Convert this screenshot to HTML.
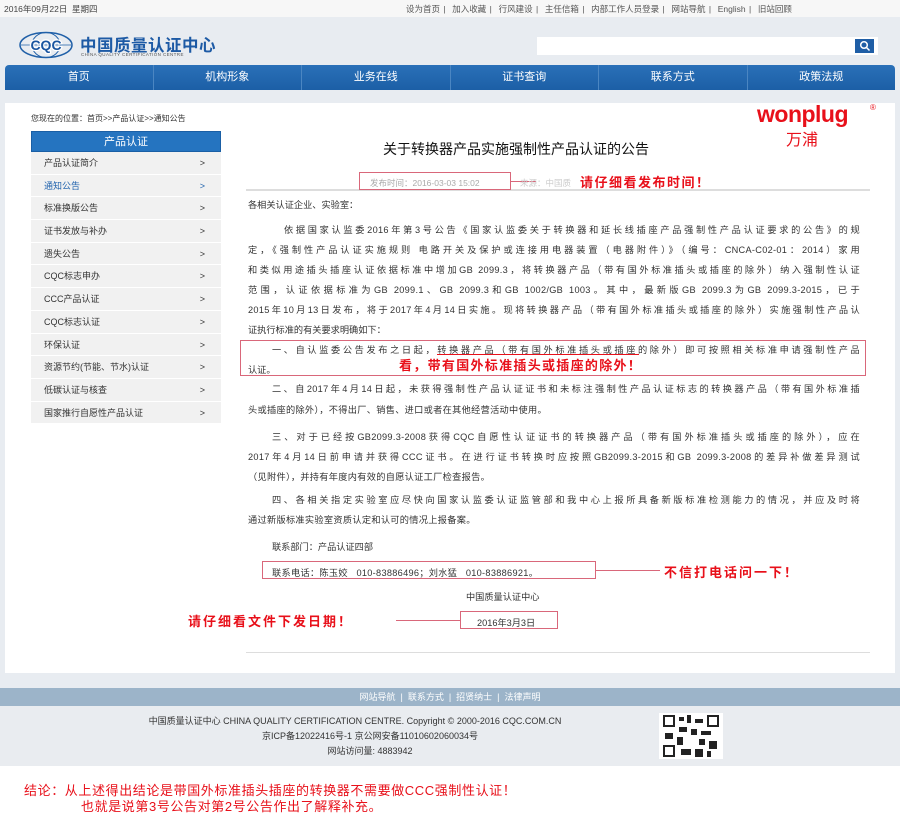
<!DOCTYPE html>
<html><head><meta charset="utf-8">
<style>
*{margin:0;padding:0;box-sizing:border-box}
body{width:900px;height:820px;position:relative;background:#fff;font-family:"Liberation Sans","Noto Sans CJK SC",sans-serif;overflow:hidden;color:#333}
.a{position:absolute;white-space:nowrap}
.top{left:0;top:0;width:900px;height:17px;background:#f7f7f7}
.hdr{left:0;top:17px;width:900px;height:671px;background:#e8ecf1}
.nav{left:5px;top:65px;width:890px;height:25px;background:linear-gradient(#2a70b8,#1c5fa6);border-radius:4px 4px 0 0;display:flex}
.nav div{flex:1;color:#fff;font-size:11px;text-align:center;line-height:25px;border-right:1px solid #4b86c2}
.nav div:last-child{border:none}
.panel{left:5px;top:103px;width:890px;height:570px;background:#fff}
.side{left:31px;top:131px;width:190px}
.side .h{height:21px;background:#2574c0;color:#fff;font-size:11px;text-align:center;line-height:21px;border:1px solid #1a5fa5}
.side .i{height:22.7px;background:#f1f1f1;border-bottom:1px solid #fff;font-size:9px;line-height:22px;padding-left:13px;position:relative;color:#333}
.side .i:after{content:">";position:absolute;right:16px;font-size:9px}
.bl{font-size:9.2px;color:#333;left:248px;width:612px;text-align:justify;text-align-last:justify;letter-spacing:.3px}
.red{color:#e8101a;font-weight:bold}
.box{position:absolute;border:1px solid #d9677a}
.foot{left:0;top:688px;width:900px;height:18px;background:#9cb4c9;color:#fff;font-size:9px;text-align:center;line-height:18px}
.ft{font-size:9px;color:#333;text-align:center}
</style></head><body>
<div class="a top"></div>
<div class="a" style="left:4px;top:3px;font-size:8.5px;color:#444">2016年09月22日 &nbsp;星期四</div>
<div class="a" style="left:406px;top:3px;font-size:8.5px;color:#555;word-spacing:1px">设为首页 | &nbsp;加入收藏 | &nbsp;行风建设 | &nbsp;主任信箱 | &nbsp;内部工作人员登录 | &nbsp;网站导航 | &nbsp;English | &nbsp;旧站回顾</div>
<div class="a hdr"></div>
<svg class="a" style="left:18px;top:31px" width="56" height="28"><ellipse cx="28" cy="14" rx="26" ry="12.5" fill="none" stroke="#2060a8" stroke-width="1.5"/><ellipse cx="28" cy="14" rx="14" ry="12.5" fill="none" stroke="#2060a8" stroke-width="1"/><line x1="3" y1="14" x2="53" y2="14" stroke="#2060a8" stroke-width=".8"/><text x="28" y="19" text-anchor="middle" font-family="Liberation Sans" font-weight="bold" font-size="14" fill="#1a55a0" stroke="#fff" stroke-width="2.5" paint-order="stroke">CQC</text></svg>
<div class="a" style="left:80px;top:32px;font-size:16.5px;color:#1d5aa5;font-weight:bold;letter-spacing:.5px">中国质量认证中心</div>
<div class="a" style="left:81px;top:52px;font-size:4.5px;color:#555;letter-spacing:.4px">CHINA QUALITY CERTIFICATION CENTRE</div>
<div class="a" style="left:537px;top:37px;width:341px;height:18px;background:#fff"></div>
<div class="a" style="left:855px;top:39px;width:19px;height:14px;background:#1f5ea6"></div>
<svg class="a" style="left:859px;top:40px" width="12" height="12"><circle cx="5" cy="5" r="3.3" fill="none" stroke="#fff" stroke-width="1.5"/><line x1="7.5" y1="7.5" x2="10.5" y2="10.5" stroke="#fff" stroke-width="1.5"/></svg>
<div class="a nav"><div>首页</div><div>机构形象</div><div>业务在线</div><div>证书查询</div><div>联系方式</div><div>政策法规</div></div>
<div class="a panel"></div>
<div class="a" style="left:31px;top:113px;font-size:8px;color:#333">您现在的位置：首页&gt;&gt;产品认证&gt;&gt;通知公告</div>
<div class="a side">
<div class="h">产品认证</div>
<div class="i">产品认证简介</div><div class="i" style="color:#2163ad">通知公告</div><div class="i">标准换版公告</div><div class="i">证书发放与补办</div><div class="i">遗失公告</div><div class="i">CQC标志申办</div><div class="i">CCC产品认证</div><div class="i">CQC标志认证</div><div class="i">环保认证</div><div class="i">资源节约(节能、节水)认证</div><div class="i">低碳认证与核查</div><div class="i">国家推行自愿性产品认证</div>
</div>
<div class="a" style="left:757px;top:101px;font-size:23px;font-weight:bold;color:#e8101a;font-family:'Liberation Sans',sans-serif;letter-spacing:-.5px">wonplug</div>
<div class="a" style="left:870px;top:103px;font-size:8px;color:#e8101a">®</div>
<div class="a" style="left:786px;top:126px;font-size:16px;color:#e8101a">万浦</div>
<div class="a" style="left:383px;top:139px;font-size:14px;color:#111">关于转换器产品实施强制性产品认证的公告</div>
<div class="a" style="left:246px;top:189px;width:624px;height:2px;background:#ddd"></div>
<div class="box" style="left:359px;top:172px;width:152px;height:18px"></div>
<div class="a" style="left:370px;top:177px;font-size:8.5px;color:#aaa">发布时间：2016-03-03 15:02</div>
<div class="a" style="left:511px;top:181px;width:25px;height:1px;background:#d9677a"></div>
<div class="a" style="left:520px;top:177px;font-size:8.5px;color:#ccc">来源：中国质</div>
<div class="a red" style="left:580px;top:172px;font-size:13px;letter-spacing:1.5px">请仔细看发布时间！</div>
<div class="a" style="left:248px;top:197px;font-size:9.2px">各相关认证企业、实验室：</div>
<div class="a bl" style="top:222px;padding-left:36px">依据国家认监委2016年第3号公告《国家认监委关于转换器和延长线插座产品强制性产品认证要求的公告》的规</div>
<div class="a bl" style="top:242px">定，《强制性产品认证实施规则 电路开关及保护或连接用电器装置（电器附件）》（编号：CNCA-C02-01：2014）家用</div>
<div class="a bl" style="top:262px">和类似用途插头插座认证依据标准中增加GB 2099.3，将转换器产品（带有国外标准插头或插座的除外）纳入强制性认证</div>
<div class="a bl" style="top:282px">范围，认证依据标准为GB 2099.1、GB 2099.3和GB 1002/GB 1003。其中，最新版GB 2099.3为GB 2099.3-2015，已于</div>
<div class="a bl" style="top:302px">2015年10月13日发布，将于2017年4月14日实施。现将转换器产品（带有国外标准插头或插座的除外）实施强制性产品认</div>
<div class="a" style="left:248px;top:322px;font-size:9.2px">证执行标准的有关要求明确如下：</div>
<div class="box" style="left:240px;top:340px;width:626px;height:36px"></div>
<div class="a bl" style="top:342px;padding-left:24px">一、自认监委公告发布之日起，转换器产品（带有国外标准插头或插座的除外）即可按照相关标准申请强制性产品</div>
<div class="a" style="left:437px;top:354px;width:202px;height:1px;background:#e8101a"></div>
<div class="a" style="left:248px;top:362px;font-size:9.2px">认证。</div>
<div class="a red" style="left:399px;top:355px;font-size:13px;letter-spacing:1.3px">看，带有国外标准插头或插座的除外！</div>
<div class="a bl" style="top:381px;padding-left:24px">二、自2017年4月14日起，未获得强制性产品认证证书和未标注强制性产品认证标志的转换器产品（带有国外标准插</div>
<div class="a" style="left:248px;top:402px;font-size:9.2px;letter-spacing:.3px">头或插座的除外），不得出厂、销售、进口或者在其他经营活动中使用。</div>
<div class="a bl" style="top:429px;padding-left:24px">三、对于已经按GB2099.3-2008获得CQC自愿性认证证书的转换器产品（带有国外标准插头或插座的除外），应在</div>
<div class="a bl" style="top:449px">2017年4月14日前申请并获得CCC证书。在进行证书转换时应按照GB2099.3-2015和GB 2099.3-2008的差异补做差异测试</div>
<div class="a" style="left:248px;top:469px;font-size:9.2px;letter-spacing:.3px">（见附件），并持有年度内有效的自愿认证工厂检查报告。</div>
<div class="a bl" style="top:492px;padding-left:24px">四、各相关指定实验室应尽快向国家认监委认证监管部和我中心上报所具备新版标准检测能力的情况，并应及时将</div>
<div class="a" style="left:248px;top:512px;font-size:9.2px;letter-spacing:.3px">通过新版标准实验室资质认定和认可的情况上报备案。</div>
<div class="a" style="left:272px;top:539px;font-size:9.2px">联系部门：产品认证四部</div>
<div class="box" style="left:262px;top:561px;width:334px;height:18px"></div>
<div class="a" style="left:272px;top:565px;font-size:9.2px;letter-spacing:.3px">联系电话：陈玉姣 &nbsp; 010-83886496；刘水猛 &nbsp; 010-83886921。</div>
<div class="a" style="left:596px;top:570px;width:64px;height:1px;background:#d9677a"></div>
<div class="a red" style="left:664px;top:562px;font-size:13px;letter-spacing:2px">不信打电话问一下！</div>
<div class="a" style="left:466px;top:589px;font-size:9.2px">中国质量认证中心</div>
<div class="a red" style="left:188px;top:611px;font-size:13px;letter-spacing:2px">请仔细看文件下发日期！</div>
<div class="a" style="left:396px;top:620px;width:64px;height:1px;background:#d9677a"></div>
<div class="box" style="left:460px;top:611px;width:98px;height:18px"></div>
<div class="a" style="left:477px;top:615px;font-size:9.2px">2016年3月3日</div>
<div class="a" style="left:246px;top:652px;width:624px;height:1px;background:#ddd"></div>
<div class="a foot">网站导航 &nbsp;| &nbsp;联系方式 &nbsp;| &nbsp;招贤纳士 &nbsp;| &nbsp;法律声明</div>
<div class="a" style="left:0;top:706px;width:900px;height:60px;background:#e9ecf0"></div>
<div class="a ft" style="left:60px;width:590px;top:714px">中国质量认证中心 CHINA QUALITY CERTIFICATION CENTRE. Copyright © 2000-2016 CQC.COM.CN</div>
<div class="a ft" style="left:220px;width:300px;top:729px">京ICP备12022416号-1 京公网安备11010602060034号</div>
<div class="a ft" style="left:220px;width:300px;top:744px">网站访问量: 4883942</div>
<svg class="a" style="left:659px;top:713px" width="64" height="46"><rect width="64" height="46" fill="#fff"/><g fill="#222"><rect x="4" y="2" width="12" height="12"/><rect x="48" y="2" width="12" height="12"/><rect x="4" y="32" width="12" height="12"/><rect x="20" y="4" width="5" height="4"/><rect x="28" y="2" width="4" height="8"/><rect x="36" y="6" width="8" height="4"/><rect x="20" y="14" width="8" height="5"/><rect x="32" y="16" width="6" height="6"/><rect x="42" y="18" width="10" height="4"/><rect x="6" y="20" width="8" height="6"/><rect x="18" y="24" width="6" height="8"/><rect x="40" y="26" width="6" height="6"/><rect x="50" y="28" width="8" height="8"/><rect x="22" y="36" width="10" height="6"/><rect x="36" y="36" width="8" height="8"/><rect x="48" y="38" width="4" height="6"/></g><g fill="#fff"><rect x="6" y="4" width="8" height="8"/><rect x="50" y="4" width="8" height="8"/><rect x="6" y="34" width="8" height="8"/></g></svg>
<div class="a" style="left:24px;top:780px;font-size:13px;color:#e8101a;letter-spacing:.6px">结论：从上述得出结论是带国外标准插头插座的转换器不需要做CCC强制性认证！</div>
<div class="a" style="left:81px;top:796px;font-size:13px;color:#e8101a;letter-spacing:.6px">也就是说第3号公告对第2号公告作出了解释补充。</div>
</body></html>
